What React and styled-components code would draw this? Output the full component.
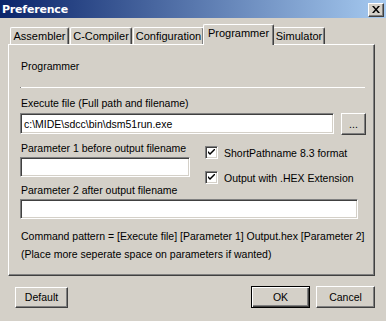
import React from 'react'
import styled, { createGlobalStyle, css } from 'styled-components'

const GlobalStyle = createGlobalStyle`
  html, body {
    margin: 0;
    padding: 0;
    background: #d4d0c8;
  }
  body {
    font-family: "Liberation Sans", Arial, sans-serif;
    font-size: 10.5px;
    color: #000;
  }
`;

const raised = css`
  border-top: 1px solid #fff;
  border-left: 1px solid #fff;
  border-right: 1px solid #404040;
  border-bottom: 1px solid #404040;
  box-shadow: inset -1px -1px 0 #808080;
`;

const sunken = css`
  border-top: 1px solid #808080;
  border-left: 1px solid #808080;
  border-right: 1px solid #fff;
  border-bottom: 1px solid #fff;
  box-shadow: inset 1px 1px 0 #404040, inset -1px -1px 0 #d4d0c8;
`;

const Window = styled.div`
  width: 386px;
  height: 321px;
  background: #d4d0c8;
  display: flex;
  flex-direction: column;
  overflow: hidden;
`;

const TitleBar = styled.div`
  height: 18px;
  display: flex;
  align-items: center;
  justify-content: space-between;
  padding: 0 2px 0 2px;
  background: linear-gradient(to right, #0a246a, #a6caf0);
`;

const Title = styled.span`
  color: #fff;
  font-family: "DejaVu Sans", sans-serif;
  font-weight: bold;
  font-size: 11px;
  letter-spacing: -0.2px;
`;

const CloseButton = styled.div`
  width: 14px;
  height: 12px;
  ${raised};
  background: #d4d0c8;
  display: flex;
  align-items: center;
  justify-content: center;
  margin-top: 1px;
`;

const Body = styled.div`
  flex: 1;
  display: flex;
  flex-direction: column;
  padding: 7px 11px 0 8px;
`;

const TabStrip = styled.div`
  display: flex;
  align-items: flex-end;
  height: 19px;
  padding-left: 2px;
  position: relative;
  z-index: 1;
`;

const Tab = styled.div`
  box-sizing: border-box;
  width: ${p => p.$w}px;
  height: ${p => (p.$active ? 21 : 17)}px;
  margin: ${p => (p.$active ? '0 -1px -1px -2px' : '0 1px 0 0')};
  padding-top: 2px;
  text-align: center;
  border-top: 1px solid #fff;
  border-left: 1px solid #fff;
  border-right: 1px solid #404040;
  border-radius: 2px 2px 0 0;
  box-shadow: inset -1px 0 0 #808080;
  background: #d4d0c8;
  white-space: nowrap;
  font-size: 11px;
  ${p => p.$active && css`
    position: relative;
    z-index: 2;
  `}
`;

const Panel = styled.div`
  box-sizing: border-box;
  width: 367px;
  height: 232px;
  ${raised};
  padding: 14px 8px 0 11px;
  display: flex;
  flex-direction: column;
`;

const GroupTitle = styled.div`
  height: 14px;
  line-height: 14px;
  margin-left: 1px;
`;

const Separator = styled.div`
  height: 1px;
  margin: 14px 0 0 0;
  width: 345px;
  background: #fff;
  border-left: 1px solid #808080;
  box-sizing: border-box;
`;

const Label = styled.div`
  height: 14px;
  line-height: 14px;
  margin-top: ${p => p.$mt || 0}px;
  margin-left: 1px;
  white-space: nowrap;
`;

const Row = styled.div`
  display: flex;
  align-items: flex-start;
  margin-top: ${p => p.$mt || 0}px;
`;

const TextBox = styled.div`
  box-sizing: border-box;
  width: ${p => p.$w}px;
  height: ${p => p.$h || 20}px;
  background: #fff;
  ${sunken};
  padding: 0 3px;
  display: flex;
  align-items: center;
  white-space: nowrap;
  overflow: hidden;
`;

const Button = styled.div`
  box-sizing: border-box;
  width: ${p => p.$w}px;
  height: ${p => p.$h || 22}px;
  background: #d4d0c8;
  ${raised};
  display: flex;
  align-items: center;
  justify-content: center;
  ${p => p.$default && css`
    border: 1px solid #000;
    box-shadow: inset 1px 1px 0 #fff, inset -1px -1px 0 #404040, inset -2px -2px 0 #808080;
  `}
`;

const BrowseButton = styled(Button)`
  margin-left: 7px;
`;

const Columns = styled.div`
  display: flex;
  align-items: flex-start;
`;

const LeftCol = styled.div`
  display: flex;
  flex-direction: column;
  width: 185px;
`;

const RightCol = styled.div`
  display: flex;
  flex-direction: column;
  gap: 12px;
  padding-top: 11px;
  margin-bottom: -8px;
`;

const CheckRow = styled.div`
  display: flex;
  align-items: center;
  gap: 6px;
  height: 13px;
  white-space: nowrap;
`;

const Box = styled.div`
  box-sizing: border-box;
  width: 13px;
  height: 13px;
  background: #fff;
  ${sunken};
  display: flex;
  align-items: center;
  justify-content: center;
`;

const Footer = styled.div`
  display: flex;
  align-items: center;
  padding: 10px 0 0 7px;
`;

const Spacer = styled.div`
  flex: 1;
`;

const Buttons = styled.div`
  display: flex;
  gap: 6px;
`;

const Check = () => (
  <svg width="7" height="7" viewBox="0 0 7 7">
    <path d="M0 2 L0 4 L2 6 L7 1 L7 -1 L2 4 Z" fill="#000" />
  </svg>
);

const tabs = [
  { name: 'Assembler', w: 59 },
  { name: 'C-Compiler', w: 62 },
  { name: 'Configuration', w: 71 },
  { name: 'Programmer', w: 71, active: true },
  { name: 'Simulator', w: 52 },
];

export default function App() {
  return (
    <Window>
      <GlobalStyle />
      <TitleBar>
        <Title>Preference</Title>
        <CloseButton>
          <svg width="8" height="7" viewBox="0 0 8 7">
            <path d="M0 0h2l2 2.5L6 0h2L5 3.5 8 7H6L4 4.5 2 7H0l3-3.5z" fill="#000" />
          </svg>
        </CloseButton>
      </TitleBar>
      <Body>
        <TabStrip>
          {tabs.map(t => (
            <Tab key={t.name} $w={t.w} $active={t.active}>{t.name}</Tab>
          ))}
        </TabStrip>
        <Panel>
          <GroupTitle>Programmer</GroupTitle>
          <Separator />
          <Label $mt={8}>Execute file (Full path and filename)</Label>
          <Row $mt={3}>
            <TextBox $w={314} $h={21}>c:\MIDE\sdcc\bin\dsm51run.exe</TextBox>
            <BrowseButton $w={25} $h={22}>...</BrowseButton>
          </Row>
          <Columns>
            <LeftCol>
              <Label $mt={6}>Parameter 1 before output filename</Label>
              <Row $mt={2}>
                <TextBox $w={170} $h={20} />
              </Row>
            </LeftCol>
            <RightCol>
              <CheckRow><Box><Check /></Box>ShortPathname 8.3 format</CheckRow>
              <CheckRow><Box><Check /></Box>Output with .HEX Extension</CheckRow>
            </RightCol>
          </Columns>
          <Label $mt={6}>Parameter 2 after output filename</Label>
          <Row $mt={2}>
            <TextBox $w={338} $h={20} />
          </Row>
          <Label $mt={10}>Command pattern = [Execute file] [Parameter 1] Output.hex [Parameter 2]</Label>
          <Label $mt={4}>(Place more seperate space on parameters if wanted)</Label>
        </Panel>
        <Footer>
          <Button $w={53} $h={21}>Default</Button>
          <Spacer />
          <Buttons>
            <Button $w={59} $h={22} $default>OK</Button>
            <Button $w={59} $h={22}>Cancel</Button>
          </Buttons>
        </Footer>
      </Body>
    </Window>
  )
}
